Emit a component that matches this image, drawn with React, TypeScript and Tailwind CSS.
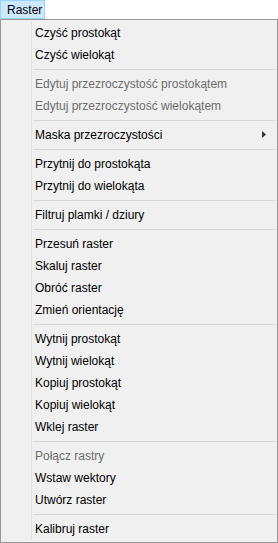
import React from 'react';

type Entry = { label?: string; disabled?: boolean; submenu?: boolean; sep?: boolean };

const entries: Entry[] = [
  { label: 'Czyść prostokąt' },
  { label: 'Czyść wielokąt' },
  { sep: true },
  { label: 'Edytuj przezroczystość prostokątem', disabled: true },
  { label: 'Edytuj przezroczystość wielokątem', disabled: true },
  { sep: true },
  { label: 'Maska przezroczystości', submenu: true },
  { sep: true },
  { label: 'Przytnij do prostokąta' },
  { label: 'Przytnij do wielokąta' },
  { sep: true },
  { label: 'Filtruj plamki / dziury' },
  { sep: true },
  { label: 'Przesuń raster' },
  { label: 'Skaluj raster' },
  { label: 'Obróć raster' },
  { label: 'Zmień orientację' },
  { sep: true },
  { label: 'Wytnij prostokąt' },
  { label: 'Wytnij wielokąt' },
  { label: 'Kopiuj prostokąt' },
  { label: 'Kopiuj wielokąt' },
  { label: 'Wklej raster' },
  { sep: true },
  { label: 'Połącz rastry', disabled: true },
  { label: 'Wstaw wektory' },
  { label: 'Utwórz raster' },
  { sep: true },
  { label: 'Kalibruj raster' },
];

function Row({ e }: { e: Entry }) {
  if (e.sep) {
    return (
      <div className="flex h-[7px]">
        <div className="w-[31px] shrink-0 border-r border-[#e2e2e2]" />
        <div className="flex flex-1 items-center pl-[1px] pr-px">
          <div className="h-px w-full bg-[#d7d7d7]" />
        </div>
      </div>
    );
  }
  return (
    <div className="flex h-[22px]">
      <div className="w-[31px] shrink-0 border-r border-[#e2e2e2]" />
      <div className={`flex flex-1 items-center pl-[3px] pr-[11px] leading-[22px] ${e.disabled ? 'text-[#6d6d6d]' : 'text-black'}`}>
        <span className="flex-1">{e.label}</span>
        {e.submenu && (
          <svg width="4" height="7" viewBox="0 0 4 7" className="-mt-px">
            <polygon points="0,0 4,3.5 0,7" fill="#333" />
          </svg>
        )}
      </div>
    </div>
  );
}

export default function App() {
  return (
    <div className="h-[543px] w-[278px] bg-white text-[12px]" style={{ fontFamily: '"Liberation Sans", Arial, sans-serif' }}>
      <div className="flex h-[19px] w-[45px] items-center border border-[#99d1ff] bg-[#cce8ff] pl-[6px] text-black">
        Raster
      </div>
      <div className="h-[524px] border border-[#979797] bg-[#f0f0f0] py-[2px]">
        {entries.map((e, i) => (
          <Row key={i} e={e} />
        ))}
      </div>
    </div>
  );
}
